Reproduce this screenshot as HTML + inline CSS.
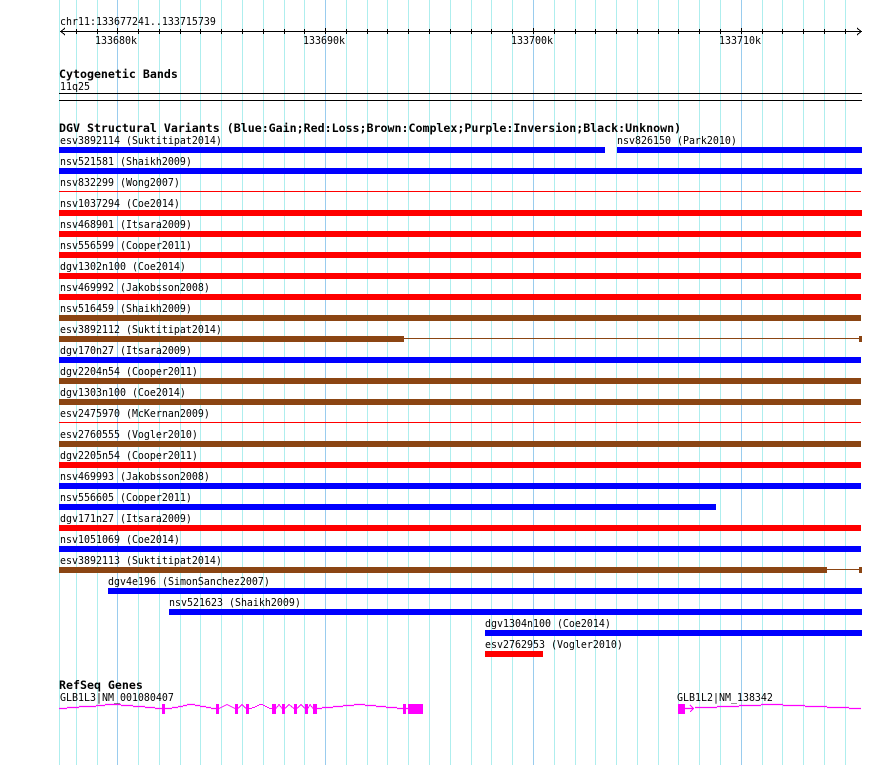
<!DOCTYPE html>
<html>
<head>
<meta charset="utf-8">
<title>Genome browser</title>
<style>
html,body{margin:0;padding:0;background:#fff;width:890px;height:765px;overflow:hidden}
svg{display:block}
text{font-family:"DejaVu Sans Mono",monospace;font-size:10px;fill:#000;white-space:pre}
.b{font-weight:bold;font-size:11.62px}
</style>
</head>
<body>
<svg width="890" height="765" viewBox="0 0 890 765" xmlns="http://www.w3.org/2000/svg">
<g shape-rendering="crispEdges" fill="none">
<path stroke="#aeeeee" d="M59.5 0V765M76.5 0V765M97.5 0V765M138.5 0V765M159.5 0V765M180.5 0V765M200.5 0V765M221.5 0V765M242.5 0V765M263.5 0V765M284.5 0V765M304.5 0V765M346.5 0V765M367.5 0V765M387.5 0V765M408.5 0V765M429.5 0V765M450.5 0V765M471.5 0V765M491.5 0V765M512.5 0V765M554.5 0V765M575.5 0V765M595.5 0V765M616.5 0V765M637.5 0V765M658.5 0V765M678.5 0V765M699.5 0V765M720.5 0V765M762.5 0V765M782.5 0V765M803.5 0V765M824.5 0V765M845.5 0V765"/>
<path stroke="#99ccee" d="M117.5 0V765M325.5 0V765M533.5 0V765M741.5 0V765"/>
<path stroke="#000" d="M60 31.5H862M76.5 29V34M97.5 29V34M117.5 28V34M138.5 29V34M159.5 29V34M180.5 29V34M200.5 29V34M221.5 29V34M242.5 29V34M263.5 29V34M284.5 29V34M304.5 29V34M325.5 28V34M346.5 29V34M367.5 29V34M387.5 29V34M408.5 29V34M429.5 29V34M450.5 29V34M471.5 29V34M491.5 29V34M512.5 29V34M533.5 28V34M554.5 29V34M575.5 29V34M595.5 29V34M616.5 29V34M637.5 29V34M658.5 29V34M678.5 29V34M699.5 29V34M720.5 29V34M741.5 28V34M762.5 29V34M782.5 29V34M803.5 29V34M824.5 29V34M845.5 29V34"/>
<path stroke="#000" d="M65 28L61 31.5L65 35M857 28L861 31.5L857 35"/>
<path stroke="#000" d="M59 93.5H862M59 100.5H862"/>
</g>
<g shape-rendering="crispEdges">
<rect x="59" y="147" width="546" height="6" fill="#00f"/>
<rect x="617" y="147" width="245" height="6" fill="#00f"/>
<rect x="59" y="168" width="803" height="6" fill="#00f"/>
<rect x="59" y="191" width="802" height="1" fill="#f00"/>
<rect x="59" y="210" width="803" height="6" fill="#f00"/>
<rect x="59" y="231" width="802" height="6" fill="#f00"/>
<rect x="59" y="252" width="802" height="6" fill="#f00"/>
<rect x="59" y="273" width="802" height="6" fill="#f00"/>
<rect x="59" y="294" width="802" height="6" fill="#f00"/>
<rect x="59" y="315" width="802" height="6" fill="#8b4513"/>
<rect x="59" y="336" width="345" height="6" fill="#8b4513"/>
<rect x="404" y="338" width="457" height="1" fill="#8b4513"/>
<rect x="859" y="336" width="3" height="6" fill="#8b4513"/>
<rect x="59" y="357" width="802" height="6" fill="#00f"/>
<rect x="59" y="378" width="802" height="6" fill="#8b4513"/>
<rect x="59" y="399" width="802" height="6" fill="#8b4513"/>
<rect x="59" y="422" width="802" height="1" fill="#f00"/>
<rect x="59" y="441" width="802" height="6" fill="#8b4513"/>
<rect x="59" y="462" width="802" height="6" fill="#f00"/>
<rect x="59" y="483" width="802" height="6" fill="#00f"/>
<rect x="59" y="504" width="657" height="6" fill="#00f"/>
<rect x="59" y="525" width="802" height="6" fill="#f00"/>
<rect x="59" y="546" width="802" height="6" fill="#00f"/>
<rect x="59" y="567" width="768" height="6" fill="#8b4513"/>
<rect x="827" y="569" width="34" height="1" fill="#8b4513"/>
<rect x="859" y="567" width="3" height="6" fill="#8b4513"/>
<rect x="108" y="588" width="754" height="6" fill="#00f"/>
<rect x="169" y="609" width="693" height="6" fill="#00f"/>
<rect x="485" y="630" width="377" height="6" fill="#00f"/>
<rect x="485" y="651" width="58" height="6" fill="#f00"/>
</g>
<g fill="none" stroke="#ff00ff">
<path stroke-width="1.3" d="M59 708.5H67M67 707.5H79M79 706.5H96M96 705.5H105M105 704.5H121M121 705.5H133M133 706.5H145M145 707.5H155M155 708.5H163"/>
<path stroke-width="1.3" d="M165 708.5H172M172 707.5H178M178 706.5H183M183 705.5H187M187 704.5H195M195 705.5H200M200 706.5H206M206 707.5H211M211 708.5H216"/>
<path shape-rendering="crispEdges" d="M219 708.5L227 704.5L235 708.5M238 708.5L242 704.5L246 708.5M249 708.5H252M252 707.5H255M255 706.5H257M257 705.5H259M259 704.5H263M263 705.5H265M265 706.5H267M267 707.5H269M269 708.5H272M276 708.5L279 704.5L282 708.5M285 708.5L289 704.5L294 708.5M297 708.5L301 704.5L305 708.5M308 708.5L310 704.5L313 708.5"/>
<path stroke-width="1.3" d="M317 708.5H322M322 707.5H333M333 706.5H343M343 705.5H354M354 704.5H365M365 705.5H376M376 706.5H386M386 707.5H397M397 708.5H403M406 708.5H408"/>
<path stroke-width="1.3" d="M685 708.5H693"/>
<path shape-rendering="crispEdges" d="M690 705L693.5 708.5L690 712"/>
<path stroke-width="1.3" d="M695 707.5H717M717 706.5H739M739 705.5H761M761 704.5H783M783 705.5H805M805 706.5H827M827 707.5H849M849 708.5H861"/>
</g>
<g shape-rendering="crispEdges" fill="#ff00ff">
<rect x="162" y="704" width="3" height="10"/>
<rect x="216" y="704" width="3" height="10"/>
<rect x="235" y="704" width="3" height="10"/>
<rect x="246" y="704" width="3" height="10"/>
<rect x="272" y="704" width="4" height="10"/>
<rect x="282" y="704" width="3" height="10"/>
<rect x="294" y="704" width="3" height="10"/>
<rect x="305" y="704" width="3" height="10"/>
<rect x="313" y="704" width="4" height="10"/>
<rect x="403" y="704" width="3" height="10"/>
<rect x="408" y="704" width="15" height="10"/>
<rect x="678" y="704" width="7" height="10"/>
</g>
<text transform="translate(60,25) scale(.997,1.1)">chr11:133677241..133715739</text>
<text transform="translate(95,44) scale(.997,1.1)">133680k</text>
<text transform="translate(303,44) scale(.997,1.1)">133690k</text>
<text transform="translate(511,44) scale(.997,1.1)">133700k</text>
<text transform="translate(719,44) scale(.997,1.1)">133710k</text>
<text class="b" transform="translate(59,78)">Cytogenetic Bands</text>
<text transform="translate(60,90) scale(.997,1.1)">11q25</text>
<text class="b" transform="translate(59,132)">DGV Structural Variants (Blue:Gain;Red:Loss;Brown:Complex;Purple:Inversion;Black:Unknown)</text>
<text transform="translate(60,144) scale(.997,1.1)">esv3892114 (Suktitipat2014)</text>
<text transform="translate(617,144) scale(.997,1.1)">nsv826150 (Park2010)</text>
<text transform="translate(60,165) scale(.997,1.1)">nsv521581 (Shaikh2009)</text>
<text transform="translate(60,186) scale(.997,1.1)">nsv832299 (Wong2007)</text>
<text transform="translate(60,207) scale(.997,1.1)">nsv1037294 (Coe2014)</text>
<text transform="translate(60,228) scale(.997,1.1)">nsv468901 (Itsara2009)</text>
<text transform="translate(60,249) scale(.997,1.1)">nsv556599 (Cooper2011)</text>
<text transform="translate(60,270) scale(.997,1.1)">dgv1302n100 (Coe2014)</text>
<text transform="translate(60,291) scale(.997,1.1)">nsv469992 (Jakobsson2008)</text>
<text transform="translate(60,312) scale(.997,1.1)">nsv516459 (Shaikh2009)</text>
<text transform="translate(60,333) scale(.997,1.1)">esv3892112 (Suktitipat2014)</text>
<text transform="translate(60,354) scale(.997,1.1)">dgv170n27 (Itsara2009)</text>
<text transform="translate(60,375) scale(.997,1.1)">dgv2204n54 (Cooper2011)</text>
<text transform="translate(60,396) scale(.997,1.1)">dgv1303n100 (Coe2014)</text>
<text transform="translate(60,417) scale(.997,1.1)">esv2475970 (McKernan2009)</text>
<text transform="translate(60,438) scale(.997,1.1)">esv2760555 (Vogler2010)</text>
<text transform="translate(60,459) scale(.997,1.1)">dgv2205n54 (Cooper2011)</text>
<text transform="translate(60,480) scale(.997,1.1)">nsv469993 (Jakobsson2008)</text>
<text transform="translate(60,501) scale(.997,1.1)">nsv556605 (Cooper2011)</text>
<text transform="translate(60,522) scale(.997,1.1)">dgv171n27 (Itsara2009)</text>
<text transform="translate(60,543) scale(.997,1.1)">nsv1051069 (Coe2014)</text>
<text transform="translate(60,564) scale(.997,1.1)">esv3892113 (Suktitipat2014)</text>
<text transform="translate(108,585) scale(.997,1.1)">dgv4e196 (SimonSanchez2007)</text>
<text transform="translate(169,606) scale(.997,1.1)">nsv521623 (Shaikh2009)</text>
<text transform="translate(485,627) scale(.997,1.1)">dgv1304n100 (Coe2014)</text>
<text transform="translate(485,648) scale(.997,1.1)">esv2762953 (Vogler2010)</text>
<text class="b" transform="translate(59,689)">RefSeq Genes</text>
<text transform="translate(60,701) scale(.997,1.1)">GLB1L3|NM_001080407</text>
<text transform="translate(677,701) scale(.997,1.1)">GLB1L2|NM_138342</text>
</svg>
</body>
</html>
